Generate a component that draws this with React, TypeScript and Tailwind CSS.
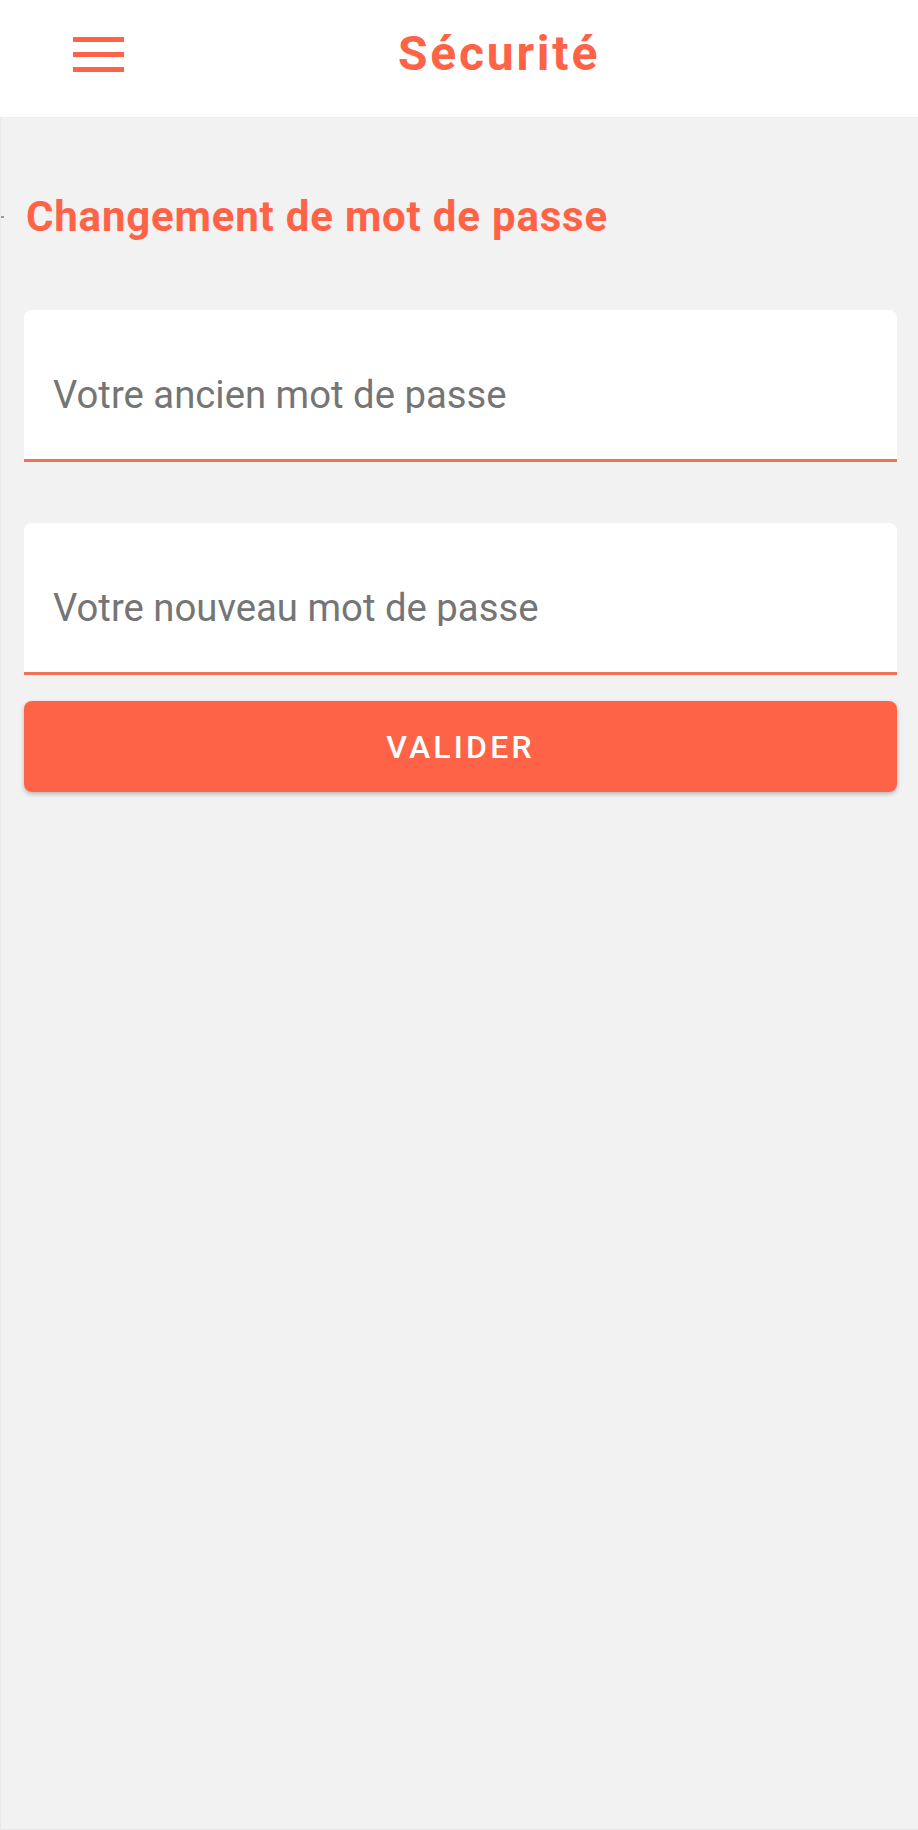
import React from "react";

function PasswordField({ placeholder }: { placeholder: string }) {
  return (
    <div className="flex h-[152px] flex-col rounded-t-[8px] border-b-[3px] border-[#f07359] bg-white pl-[29px] pt-[65px]">
      <input
        type="password"
        placeholder={placeholder}
        className="h-[38px] bg-transparent text-[38.3px] leading-[38px] text-[#3a3a3a] outline-none placeholder:text-[#757575]"
      />
    </div>
  );
}

export default function App() {
  return (
    <div className="flex h-[1830px] w-[918px] flex-col font-['Roboto',sans-serif]">
      <header className="flex h-[118px] shrink-0 items-center border-b border-[#ececec] bg-white pb-[9px]">
        <button type="button" className="ml-[73px] flex w-[51px] flex-col gap-[10px]" aria-label="Menu">
          <span className="block h-[5px] w-full bg-[#ff6347]" />
          <span className="block h-[5px] w-full bg-[#ff6347]" />
          <span className="block h-[5px] w-full bg-[#ff6347]" />
        </button>
        <h1 className="flex-1 pr-[44px] text-center text-[48px] font-bold leading-none tracking-[2.8px] text-[#ff6347]">
          Sécurité
        </h1>
      </header>

      <main className="flex flex-1 flex-col border-b border-l border-[#e9e9e9] bg-[#f2f2f2] pl-[23px] pr-[21px]">
        <div className="mt-[78px] flex items-center">
          <span className="-ml-[23px] mr-[22px] block h-[2px] w-[3px] bg-[#9a9a9a]" />
          <h2 className="text-[42px] font-bold leading-[42px] tracking-[0.8px] text-[#ff6347]">Changement de mot de passe</h2>
        </div>

        <form className="mt-[72px] flex flex-col" onSubmit={(e) => e.preventDefault()}>
          <PasswordField placeholder="Votre ancien mot de passe" />
          <div className="h-[61px]" />
          <PasswordField placeholder="Votre nouveau mot de passe" />
          <button
            type="submit"
            className="mt-[26px] h-[91px] rounded-[8px] bg-[#ff6347] text-[32px] font-medium tracking-[3.2px] text-white shadow-[0_2px_4px_rgba(0,0,0,0.25)]"
          >
            VALIDER
          </button>
        </form>
      </main>
    </div>
  );
}
